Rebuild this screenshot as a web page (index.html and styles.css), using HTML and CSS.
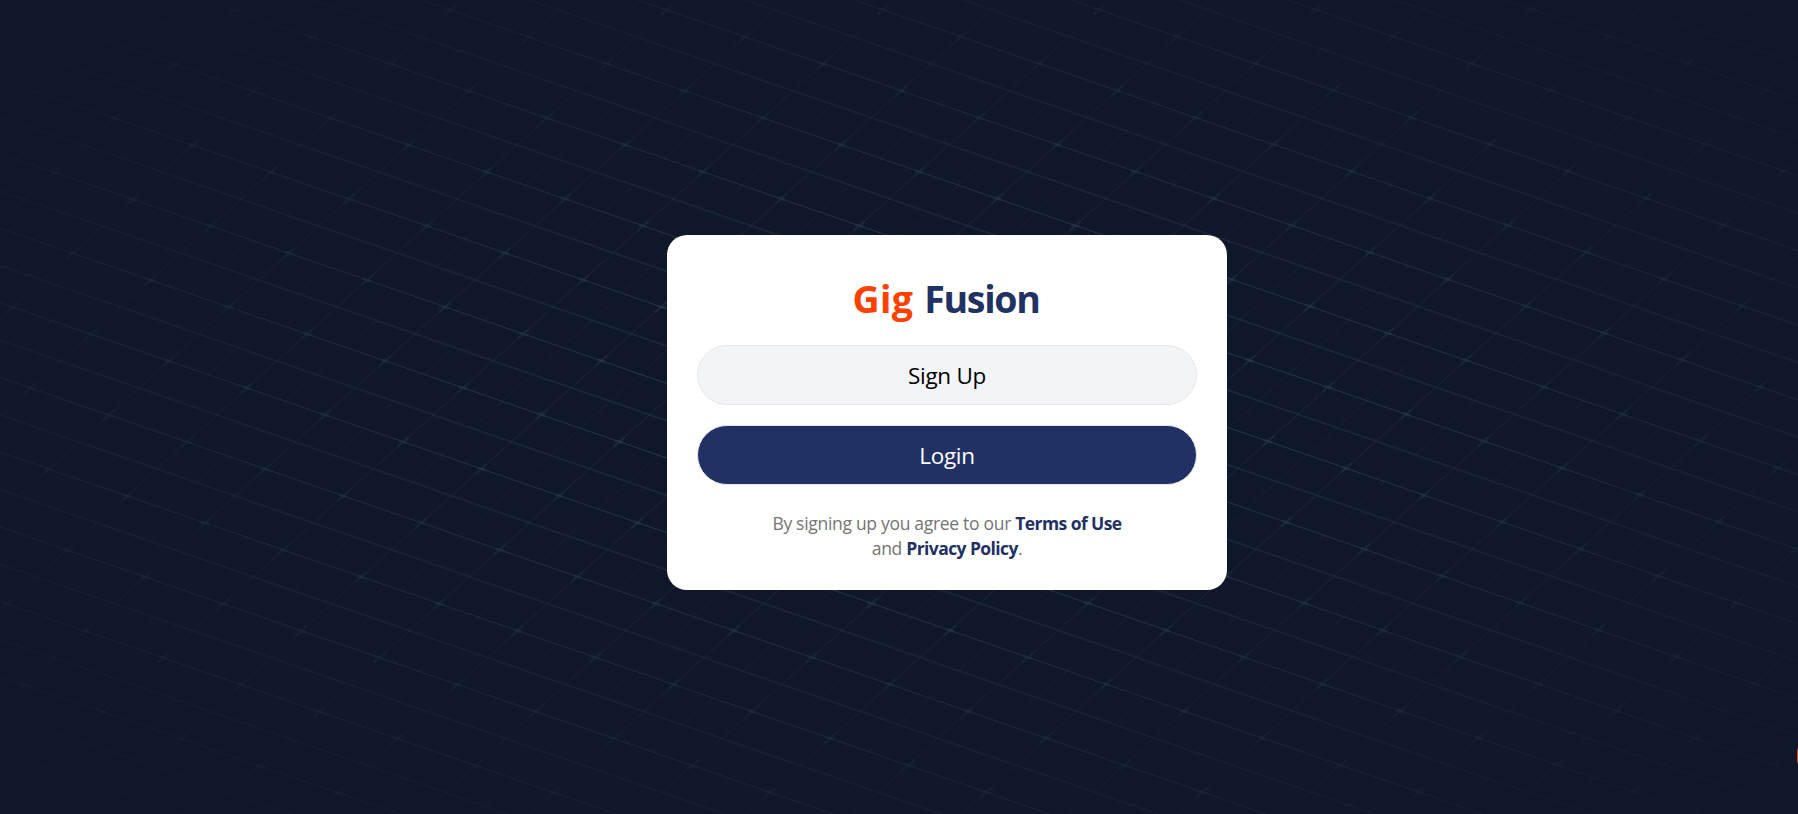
FILE: index.html
```html
<!DOCTYPE html>
<html lang="en">
<head>
<meta charset="utf-8">
<title>Gig Fusion</title>
<link rel="stylesheet" href="styles.css">
</head>
<body>
<main class="page">
  <svg class="grid" aria-hidden="true">
    <defs>
      <pattern id="cells" width="160" height="80" patternUnits="userSpaceOnUse" patternTransform="matrix(.4881 .1683 -.7497 .675 367 280)" x="-80" y="-40">
        <path class="line" d="M0 0H160M0 40H160"/>
        <path class="line" d="M0 80H160"/>
        <path class="line thin" d="M0 0V80M160 0V80"/>
        <path class="line post" d="M80 0V80"/>
        <path class="plus" d="M80 32.5V47.5M72.5 40H87.5"/>
      </pattern>
    </defs>
    <rect width="100%" height="100%" fill="url(#cells)"/>
  </svg>
  <div class="shade"></div>
  <section class="card">
    <h1 class="brand"><span class="accent">Gig</span> <span class="name">Fusion</span></h1>
    <button class="btn">Sign Up</button>
    <button class="btn primary">Login</button>
    <p class="terms">By signing up you agree to our <a>Terms of Use</a><br>and <a>Privacy Policy</a>.</p>
  </section>
  <span class="knob"></span>
</main>
</body>
</html>
```
FILE: styles.css
```css
* { box-sizing: border-box; }
body { margin: 0; background: #0f172a; font-family: "Segoe UI", "Open Sans", "Noto Sans", sans-serif; }
.page { position: relative; height: 814px; overflow: hidden; padding: 235px 0 0 667px; }
.grid, .shade { position: absolute; inset: 0; width: 100%; height: 100%; }
.shade { background: radial-gradient(ellipse farthest-corner at 947px 407px, transparent, #0f172a); }
.line { fill: none; stroke: #334155; stroke-width: 1.2; }
.thin { stroke-opacity: .42; }
.post { stroke-opacity: .7; }
.plus { fill: none; stroke: #334155; stroke-width: 3.2; stroke-opacity: .65; }
.card { position: relative; width: 560px; height: 355px; padding: 39px 30px 0; background: #fff; border-radius: 20px; display: flex; flex-direction: column; align-items: center; }
.brand { margin: 0 0 20px; font-size: 37.5px; line-height: 49px; padding: 0 2px 2px 0; font-weight: 700; color: #223163; word-spacing: 1px; }
.accent { color: #ff4000; letter-spacing: .4px; }
.name { letter-spacing: -1.3px; }
.btn { width: 500px; height: 60px; flex: none; margin-bottom: 20px; border: 1px solid #e5e7eb; border-radius: 30px; background: #f3f4f6; color: #000; font: 400 22.5px "Segoe UI", "Open Sans", sans-serif; letter-spacing: -.3px; }
.primary { background: #223163; color: #fff; }
.terms { margin: 6px 0 0; text-align: center; font-size: 17.5px; line-height: 25px; letter-spacing: -.3px; color: #757575; }
.terms a { color: #223163; font-weight: 700; letter-spacing: -.58px; }
.knob { position: absolute; left: 1797px; top: 748px; width: 16px; height: 16px; background: #ff4000; border-radius: 3px; }
```
